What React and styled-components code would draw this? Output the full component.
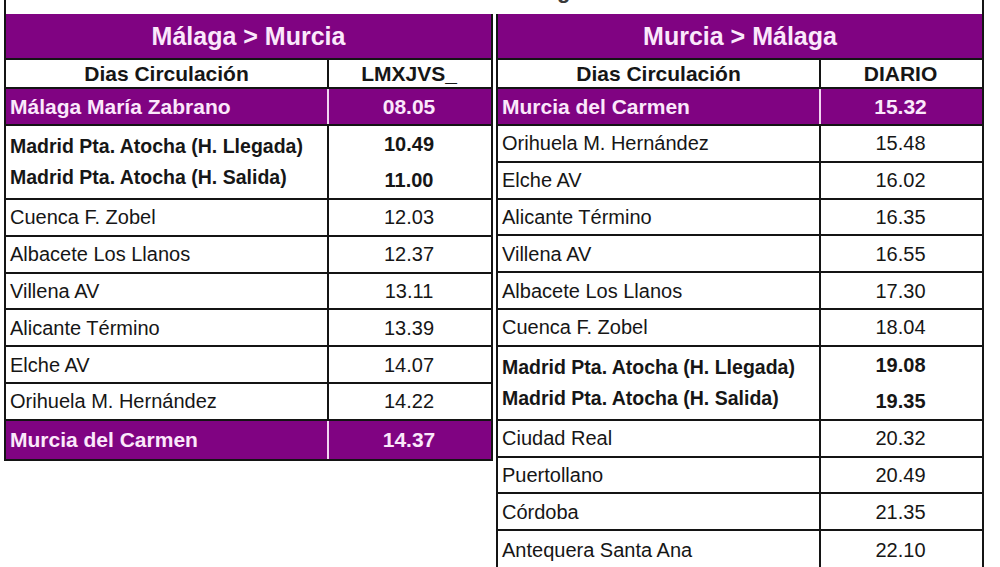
import React from "react";
import styled, { createGlobalStyle } from "styled-components";

const GlobalStyle = createGlobalStyle`
  html, body {
    margin: 0;
    padding: 0;
    background: #ffffff;
    overflow: hidden;
  }
  body {
    font-family: "Liberation Sans", Arial, sans-serif;
    color: #161616;
  }
`;

const PURPLE = "#800382";
const LIGHT = "#fbe8fb";
const LINE = "#141414";

const Page = styled.div`
  width: 980px;
  margin-left: 4px;
`;

/* only the very bottom of the title shows above the tables */
const TitleBar = styled.div`
  height: 14px;
  overflow: hidden;
  border-left: 2px solid ${LINE};
  border-right: 2px solid ${LINE};
  box-sizing: border-box;
  text-align: center;
`;

const TitleText = styled.div`
  margin-top: -21px;
  font-size: 22px;
  line-height: 24px;
  font-weight: bold;
  color: #3a3a3a;
`;

const Tables = styled.div`
  display: flex;
  align-items: flex-start;
  gap: 3px;
`;

const Table = styled.div`
  width: ${(p) => p.$width}px;
  box-sizing: border-box;
  border-left: 2px solid ${LINE};
  border-right: 2px solid ${LINE};
  border-bottom: ${(p) => (p.$open ? "none" : `2px solid ${LINE}`)};
`;

const Heading = styled.div`
  height: 46px;
  box-sizing: border-box;
  background: ${PURPLE};
  border-bottom: 2px solid ${LINE};
  color: ${LIGHT};
  font-size: 25px;
  font-weight: bold;
  display: flex;
  align-items: center;
  justify-content: center;
`;

const Row = styled.div`
  display: grid;
  grid-template-columns: 321px 1fr;
  height: ${(p) => p.$h}px;
  box-sizing: border-box;
  border-bottom: ${(p) => (p.$last ? "none" : `2px solid ${LINE}`)};
  background: ${(p) => (p.$purple ? PURPLE : "#ffffff")};
  color: ${(p) => (p.$purple ? LIGHT : "#161616")};
`;

const Name = styled.div`
  display: flex;
  flex-direction: column;
  justify-content: center;
  align-items: ${(p) => (p.$center ? "center" : "flex-start")};
  padding-left: ${(p) => (p.$center ? 0 : 4)}px;
  font-size: ${(p) => p.$size || 20}px;
  font-weight: ${(p) => (p.$bold ? "bold" : "normal")};
  line-height: ${(p) => p.$lh || 24}px;
  white-space: nowrap;
  overflow: hidden;
`;

const Time = styled.div`
  display: flex;
  flex-direction: column;
  justify-content: center;
  align-items: center;
  border-left: 2px solid ${(p) => (p.$purple ? "#f2d6f2" : LINE)};
  font-size: ${(p) => p.$size || 20}px;
  font-weight: ${(p) => (p.$bold ? "bold" : "normal")};
  line-height: ${(p) => p.$lh || 24}px;
  padding-right: 2px;
`;

const ROW_H = 36.8;

const leftRows = [
  { kind: "stop", name: "Málaga María Zabrano", time: "08.05" },
  {
    kind: "madrid",
    names: ["Madrid Pta. Atocha (H. Llegada)", "Madrid Pta. Atocha (H. Salida)"],
    times: ["10.49", "11.00"],
  },
  { name: "Cuenca F. Zobel", time: "12.03" },
  { name: "Albacete Los Llanos", time: "12.37" },
  { name: "Villena AV", time: "13.11" },
  { name: "Alicante Término", time: "13.39" },
  { name: "Elche AV", time: "14.07" },
  { name: "Orihuela M. Hernández", time: "14.22" },
  { kind: "stop", name: "Murcia del Carmen", time: "14.37" },
];

const rightRows = [
  { kind: "stop", name: "Murcia del Carmen", time: "15.32" },
  { name: "Orihuela M. Hernández", time: "15.48" },
  { name: "Elche AV", time: "16.02" },
  { name: "Alicante Término", time: "16.35" },
  { name: "Villena AV", time: "16.55" },
  { name: "Albacete Los Llanos", time: "17.30" },
  { name: "Cuenca F. Zobel", time: "18.04" },
  {
    kind: "madrid",
    names: ["Madrid Pta. Atocha (H. Llegada)", "Madrid Pta. Atocha (H. Salida)"],
    times: ["19.08", "19.35"],
  },
  { name: "Ciudad Real", time: "20.32" },
  { name: "Puertollano", time: "20.49" },
  { name: "Córdoba", time: "21.35" },
  { name: "Antequera Santa Ana", time: "22.10" },
];

const StopRow = ({ row, last }) => {
  if (row.kind === "stop") {
    return (
      <Row $h={last ? 38 : 37} $purple $last={last}>
        <Name $bold $size={21}>{row.name}</Name>
        <Time $bold $size={21} $purple>
          {row.time}
        </Time>
      </Row>
    );
  }
  if (row.kind === "madrid") {
    return (
      <Row $h={74}>
        <Name $bold $size={19.5} $lh={31}>
          {row.names.map((n) => (
            <span key={n}>{n}</span>
          ))}
        </Name>
        <Time $bold $size={20} $lh={36}>
          {row.times.map((t) => (
            <span key={t}>{t}</span>
          ))}
        </Time>
      </Row>
    );
  }
  return (
    <Row $h={ROW_H} $last={last}>
      <Name>{row.name}</Name>
      <Time>{row.time}</Time>
    </Row>
  );
};

const Timetable = ({ title, days, rows, width, open }) => (
  <Table $width={width} $open={open}>
    <Heading>{title}</Heading>
    <Row $h={29}>
      <Name $center $bold $size={21}>
        Dias Circulación
      </Name>
      <Time $bold $size={21}>
        {days}
      </Time>
    </Row>
    {rows.map((row, i) => (
      <StopRow key={i} row={row} last={i === rows.length - 1} />
    ))}
  </Table>
);

export default function App() {
  return (
    <>
      <GlobalStyle />
      <Page>
        <TitleBar>
          <TitleText>Horarios tren AVE Málaga - Murcia</TitleText>
        </TitleBar>
        <Tables>
          <Timetable
            title="Málaga > Murcia"
            days="LMXJVS_"
            rows={leftRows}
            width={489}
          />
          <Timetable
            title="Murcia > Málaga"
            days="DIARIO"
            rows={rightRows}
            width={488}
            open
          />
        </Tables>
      </Page>
    </>
  );
}
